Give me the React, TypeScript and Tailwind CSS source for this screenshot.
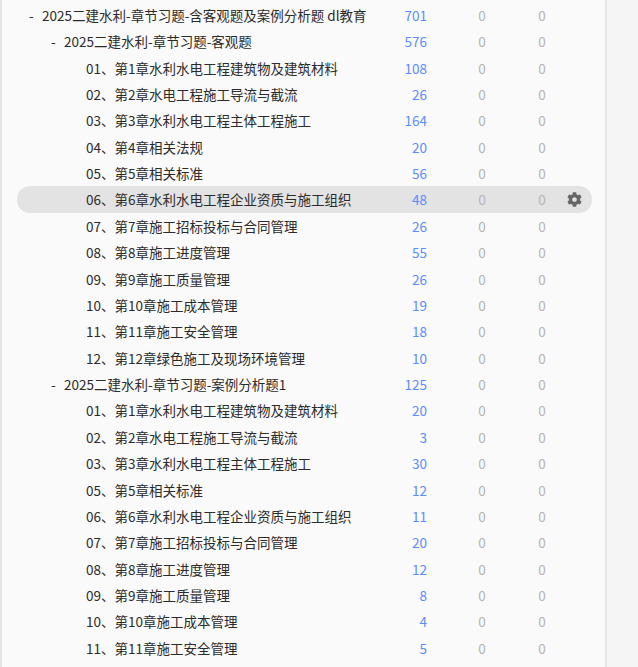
import { FaCog } from "react-icons/fa";

type Row = { indent: number; label: string; count: number; dash?: boolean; active?: boolean };

const topics = [
  "01、第1章水利水电工程建筑物及建筑材料",
  "02、第2章水电工程施工导流与截流",
  "03、第3章水利水电工程主体工程施工",
];

const rows: Row[] = [
  { indent: 0, dash: true, label: "2025二建水利-章节习题-含客观题及案例分析题 dl教育", count: 701 },
  { indent: 1, dash: true, label: "2025二建水利-章节习题-客观题", count: 576 },
  { indent: 2, label: topics[0], count: 108 },
  { indent: 2, label: topics[1], count: 26 },
  { indent: 2, label: topics[2], count: 164 },
  { indent: 2, label: "04、第4章相关法规", count: 20 },
  { indent: 2, label: "05、第5章相关标准", count: 56 },
  { indent: 2, label: "06、第6章水利水电工程企业资质与施工组织", count: 48, active: true },
  { indent: 2, label: "07、第7章施工招标投标与合同管理", count: 26 },
  { indent: 2, label: "08、第8章施工进度管理", count: 55 },
  { indent: 2, label: "09、第9章施工质量管理", count: 26 },
  { indent: 2, label: "10、第10章施工成本管理", count: 19 },
  { indent: 2, label: "11、第11章施工安全管理", count: 18 },
  { indent: 2, label: "12、第12章绿色施工及现场环境管理", count: 10 },
  { indent: 1, dash: true, label: "2025二建水利-章节习题-案例分析题1", count: 125 },
  { indent: 2, label: topics[0], count: 20 },
  { indent: 2, label: topics[1], count: 3 },
  { indent: 2, label: topics[2], count: 30 },
  { indent: 2, label: "05、第5章相关标准", count: 12 },
  { indent: 2, label: "06、第6章水利水电工程企业资质与施工组织", count: 11 },
  { indent: 2, label: "07、第7章施工招标投标与合同管理", count: 20 },
  { indent: 2, label: "08、第8章施工进度管理", count: 12 },
  { indent: 2, label: "09、第9章施工质量管理", count: 8 },
  { indent: 2, label: "10、第10章施工成本管理", count: 4 },
  { indent: 2, label: "11、第11章施工安全管理", count: 5 },
];

const indents = ["pl-[12px]", "pl-[34px]", "pl-[69px]"];

export default function App() {
  return (
    <div className="h-[667px] w-[638px] overflow-hidden bg-[#f5f5f5] font-['Noto_Sans_CJK_SC','Noto_Sans',sans-serif] text-[13.5px]">
      <div className="h-full w-[607px] border-x-[2px] border-[#e5e5e5] bg-[#fafafa] pl-[15px] pr-[13px] pt-[1.8px]">
        {rows.map((row, i) => (
          <div
            key={i}
            className={`flex h-[26.375px] items-center rounded-[13px] whitespace-pre ${row.active ? "bg-[#e3e3e3]" : ""}`}
          >
            <div className={`w-[365px] text-[#2b2b2b] ${indents[row.indent]}`}>
              {row.dash && <span className="inline-block w-[13px]">-</span>}
              {row.label}
            </div>
            <div className="w-[45px] text-right text-[#5b8cff]">{row.count}</div>
            <div className="ml-[30px] w-[50px] text-center text-[#b5b5b5]">0</div>
            <div className="ml-[10px] w-[50px] text-center text-[#b5b5b5]">0</div>
            {row.active && <FaCog className="h-[15px] w-[15px] text-[#666666]" />}
          </div>
        ))}
      </div>
    </div>
  );
}
